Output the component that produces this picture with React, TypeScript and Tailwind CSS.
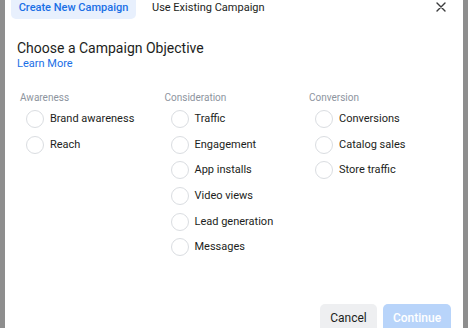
const COLUMNS: { title: string; items: string[] }[] = [
  { title: 'Awareness', items: ['Brand awareness', 'Reach'] },
  {
    title: 'Consideration',
    items: ['Traffic', 'Engagement', 'App installs', 'Video views', 'Lead generation', 'Messages'],
  },
  { title: 'Conversion', items: ['Conversions', 'Catalog sales', 'Store traffic'] },
]

function Radio({ label }: { label: string }) {
  return (
    <label className="flex h-[25.7px] items-center gap-[6px] pl-[6px]">
      <span className="h-[18px] w-[18px] shrink-0 rounded-full border border-[#dadde1] bg-white" />
      <span className="text-[11px] leading-[14px] text-[#1c1e21]">{label}</span>
    </label>
  )
}

export default function App() {
  return (
    <div
      className="flex h-[328px] w-[468px] overflow-hidden bg-[#8e8e8e]"
      style={{ fontFamily: 'Roboto, "Liberation Sans", sans-serif' }}
    >
      <div className="ml-[5px] flex h-[340px] w-[458px] shrink-0 flex-col bg-white">
        {/* ── Tabs ── */}
        <div className="flex h-[19px] items-start pl-[6px] pr-[17px]">
          <div className="flex h-[19px] w-[125px] items-start justify-center rounded-b-[5px] bg-[#e8f0fd] pt-[2px]">
            <span className="text-[11px] font-medium leading-[11px] text-[#1a6fe6]">
              Create New Campaign
            </span>
          </div>
          <div className="ml-[16px] flex items-start pt-[2px]">
            <span className="text-[11px] leading-[11px] text-[#1c1e21]">Use Existing Campaign</span>
          </div>
          <svg
            className="ml-auto mt-[2px]"
            width="10"
            height="10"
            viewBox="0 0 10 10"
            fill="none"
            stroke="#3a3b3c"
            strokeWidth="1.4"
            strokeLinecap="round"
          >
            <path d="M1 1L9 9M9 1L1 9" />
          </svg>
        </div>

        {/* ── Heading ── */}
        <div className="mt-[20px] px-[12px]">
          <h1 className="text-[14px] leading-[18px] text-[#1c1e21]">Choose a Campaign Objective</h1>
          <a className="block text-[11px] leading-[14px] text-[#1a6fe6]">Learn More</a>
        </div>

        {/* ── Objectives ── */}
        <div className="mt-[20px] flex px-[15px]">
          {COLUMNS.map(col => (
            <div key={col.title} className="w-[144.5px] shrink-0">
              <div className="mb-[2px] text-[10px] leading-[13px] text-[#8d949e]">{col.title}</div>
              {col.items.map(item => (
                <Radio key={item} label={item} />
              ))}
            </div>
          ))}
        </div>

        {/* ── Footer ── */}
        <div className="mt-auto flex justify-end gap-[6px] px-[12px] pb-[8px]">
          <button className="h-[28px] w-[57px] rounded-[5px] bg-[#eeeff1] text-[12px] text-[#1c1e21]">
            Cancel
          </button>
          <button className="h-[28px] w-[68px] rounded-[5px] bg-[#b8d4fa] text-[12px] font-medium text-white">
            Continue
          </button>
        </div>
      </div>
    </div>
  )
}
